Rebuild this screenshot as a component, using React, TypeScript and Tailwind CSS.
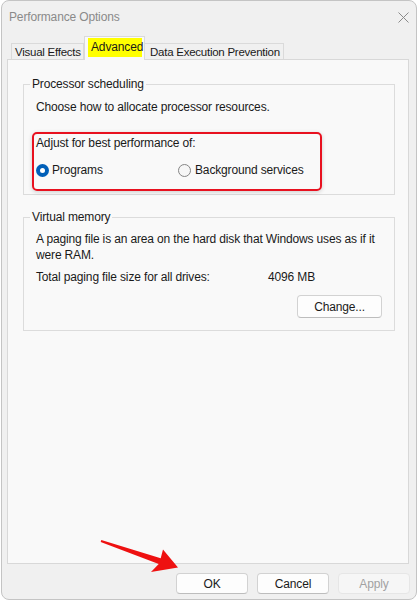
import React from "react";

function Radio({ checked }: { checked: boolean }) {
  return checked ? (
    <span className="w-[13px] h-[13px] rounded-full bg-[#005fb8] flex items-center justify-center shrink-0">
      <span className="w-[5px] h-[5px] rounded-full bg-white" />
    </span>
  ) : (
    <span className="w-[13px] h-[13px] rounded-full border border-[#858585] bg-[#f6f6f6] shrink-0" />
  );
}

function Btn({ label, disabled }: { label: string; disabled?: boolean }) {
  return (
    <div
      className={
        disabled
          ? "w-[72px] h-[21px] rounded-[4px] border border-[#e6e6e6] bg-[#f6f6f6] text-[#a2a2a2] flex items-center justify-center text-[12px]"
          : "w-[72px] h-[21px] rounded-[4px] border border-[#d2d2d2] border-b-[#bdbdbd] bg-[#fdfdfd] text-[#1a1a1a] flex items-center justify-center text-[12px]"
      }
    >
      {label}
    </div>
  );
}

export default function App() {
  return (
    <div className="w-[419px] h-[602px] bg-white relative overflow-hidden font-['Liberation_Sans',Arial,sans-serif] text-[12px] leading-[16px] tracking-[-0.15px] text-[#1a1a1a]">
      <div className="ml-[1px] w-[416px] h-[600px] rounded-[8px] border border-[#c4c4c4] bg-[#f0f0f0] flex flex-col">
        {/* title bar */}
        <div className="h-[32px] flex items-center justify-between pl-[7px] pr-[7px] shrink-0">
          <span className="text-[12px] text-[#8a8a8a]">Performance Options</span>
          <svg width="11" height="11" viewBox="0 0 11 11">
            <path d="M0.5 0.5 L10.5 10.5 M10.5 0.5 L0.5 10.5" stroke="#8a8a8a" strokeWidth="1" fill="none" />
          </svg>
        </div>
        {/* tabs */}
        <div className="h-[26px] flex items-end pl-[9px] shrink-0 whitespace-nowrap text-[11.5px] tracking-[-0.25px]">
          <div className="w-[73px] h-[16px] border border-b-0 border-[#dadada] bg-[#f0f0f0] flex items-center pl-[3px]">
            Visual Effects
          </div>
          <div className="relative z-10 w-[61px] h-[24px] -mb-px border border-b-0 border-[#dadada] bg-[#f9f9f9] pt-px pl-[3px]">
            <span className="block w-[54px] h-[19px] bg-[#ffff00] pl-[3px] leading-[19px] text-[12px] tracking-[-0.15px]">Advanced</span>
          </div>
          <div className="w-[139px] h-[16px] border border-b-0 border-l-0 border-[#dadada] bg-[#f0f0f0] flex items-center pl-[5px]">
            Data Execution Prevention
          </div>
        </div>
        {/* panel */}
        <div className="ml-[5px] mr-[7px] h-[505px] border border-[#d8d8d8] bg-[#f9f9f9] pl-[15px] pr-[13px] pt-[16px] shrink-0">
          <fieldset className="border border-[#dcdcdc] pb-[3px]">
            <legend className="ml-[6px] px-[2px] leading-[16px]">Processor scheduling</legend>
            <div className="mt-[7px] ml-[12px]">Choose how to allocate processor resources.</div>
            <div className="mt-[17px] ml-[8px] w-[290px] h-[59px] border-2 border-[#e8111f] rounded-[5px] pl-[2px] pt-px shadow-[0_1px_4px_rgba(0,0,0,0.18)]">
              <div>Adjust for best performance of:</div>
              <div className="mt-[11px] flex items-center h-[16px]">
                <div className="w-[142px] flex items-center gap-[3px]">
                  <Radio checked />
                  <span>Programs</span>
                </div>
                <div className="flex items-center gap-[4px]">
                  <Radio checked={false} />
                  <span>Background services</span>
                </div>
              </div>
            </div>
          </fieldset>
          <fieldset className="mt-[14px] border border-[#dcdcdc] pb-[12px]">
            <legend className="ml-[6px] px-[2px] leading-[16px]">Virtual memory</legend>
            <div className="mt-[6px] ml-[12px] whitespace-nowrap">
              A paging file is an area on the hard disk that Windows uses as if it
              <br />
              were RAM.
            </div>
            <div className="mt-[6px] ml-[12px] flex">
              <span className="w-[232px]">Total paging file size for all drives:</span>
              <span>4096 MB</span>
            </div>
            <div className="mt-[10px] flex justify-end pr-[12px]">
              <div className="w-[85px] h-[23px] rounded-[4px] border border-[#d2d2d2] border-b-[#bdbdbd] bg-[#fdfdfd] flex items-center justify-center">
                Change...
              </div>
            </div>
          </fieldset>
        </div>
        {/* buttons */}
        <div className="mt-[9px] flex justify-end gap-[9px] pr-[6px]">
          <Btn label="OK" />
          <Btn label="Cancel" />
          <Btn label="Apply" disabled />
        </div>
      </div>
      <svg className="absolute left-0 top-0 pointer-events-none" width="419" height="602" viewBox="0 0 419 602">
        <polygon
          points="101.3,540 160.7,558.3 163,549.5 178,567.5 151,572 158.7,563.9 100.7,542"
          fill="#ee1111"
        />
      </svg>
    </div>
  );
}
